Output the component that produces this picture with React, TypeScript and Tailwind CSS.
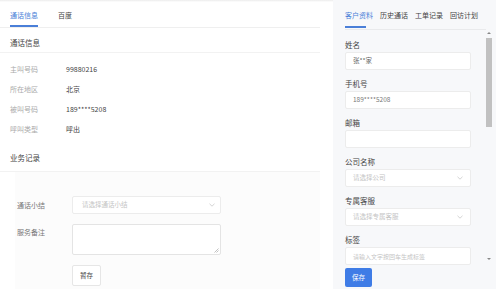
import React from "react";

const Chevron = () => (
  <svg width="6" height="4" viewBox="0 0 6 4" className="shrink-0">
    <polyline points="0.5,0.8 3,3.2 5.5,0.8" fill="none" stroke="#c8c8c8" strokeWidth="0.8" />
  </svg>
);

const InfoRow = ({ label, value }: { label: string; value: string }) => (
  <div className="h-[20px] flex items-center">
    <div className="w-[56px] text-[7px] text-[#aaa]">{label}</div>
    <div className="text-[7px] text-[#444]">{value}</div>
  </div>
);

const Field = ({ label, children }: { label: string; children: React.ReactNode }) => (
  <div className="flex flex-col">
    <div className="h-[11px] leading-[11px] text-[7.5px] text-[#444]">{label}</div>
    <div className="mt-[2px]">{children}</div>
  </div>
);

const Box = ({ children }: { children?: React.ReactNode }) => (
  <div className="w-[126px] h-[18px] bg-white border border-[#ececec] rounded-[2px] flex items-center px-[7px] text-[6.5px]">
    {children}
  </div>
);

export default function App() {
  return (
    <div
      className="w-[496px] h-[289px] overflow-hidden bg-white flex relative"
      style={{ fontFamily: '"Noto Sans CJK SC", "Noto Sans", sans-serif' }}
    >
      <div className="absolute top-0 left-0 right-0 h-[2px] bg-gradient-to-b from-[#ececec] to-transparent" />
      {/* Left panel */}
      <div className="w-[320px] shrink-0 flex flex-col">
        <div className="h-[28px] border-b border-[#efefef] flex px-[10px] gap-[20px]">
          <div className="h-full border-b-2 border-[#4a7fd8] pt-[11px] leading-[8px] text-[7px] text-[#4a7fd8]">通话信息</div>
          <div className="h-full pt-[11px] leading-[8px] text-[7px] text-[#444]">百度</div>
        </div>
        <div className="h-[25px] border-b border-[#f2f2f2] pl-[10px] pt-[11px] leading-[8px] text-[7.5px] text-[#444]">通话信息</div>
        <div className="pl-[10px] pt-[6px]">
          <InfoRow label="主叫号码" value="99880216" />
          <InfoRow label="所在地区" value="北京" />
          <InfoRow label="被叫号码" value="189****5208" />
          <InfoRow label="呼叫类型" value="呼出" />
        </div>
        <div className="mt-[15px] pb-[9px] border-b border-[#f2f2f2] pl-[10px] leading-[8px] text-[7.5px] text-[#444]">业务记录</div>
        <div className="ml-[15px] flex-1 bg-[#fcfcfc] pl-[2px] pt-[24px] flex flex-col gap-[10px]">
          <div className="flex items-center">
            <div className="w-[55px] text-[7px] text-[#777]">通话小结</div>
            <div className="w-[149px] h-[18px] bg-white border border-[#ececec] rounded-[2px] flex items-center justify-between pl-[9px] pr-[5px]">
              <span className="text-[6.5px] text-[#c4c4c4]">请选择通话小结</span>
              <Chevron />
            </div>
          </div>
          <div className="flex items-start">
            <div className="w-[55px] text-[7px] text-[#777] pt-[3px]">服务备注</div>
            <div className="w-[149px] h-[31px] bg-white border border-[#e4e4e4] rounded-[2px] relative">
              <svg width="5" height="5" viewBox="0 0 5 5" className="absolute right-[1px] bottom-[1px]">
                <line x1="0.5" y1="4.5" x2="4.5" y2="0.5" stroke="#999" strokeWidth="0.6" />
                <line x1="2.5" y1="4.5" x2="4.5" y2="2.5" stroke="#999" strokeWidth="0.6" />
              </svg>
            </div>
          </div>
          <div className="pl-[55px]">
            <div className="w-[29px] h-[21px] bg-white border border-[#e6e6e6] rounded-[2px] flex items-center justify-center text-[6.5px] text-[#444]">暂存</div>
          </div>
        </div>
      </div>
      <div className="w-[13px] shrink-0" />
      {/* Right panel */}
      <div className="flex-1 bg-[#f7f8fa] relative flex">
        <div className="pl-[12px] flex flex-col">
          <div className="h-[30px] w-[141px] border-b border-[#e9eaec] flex gap-[7px]">
            <div className="h-full flex flex-col items-start">
              <div className="pt-[11px] leading-[8px] text-[7px] text-[#4a7fd8]">客户资料</div>
              <div className="mt-auto mb-[1px] w-[21px] h-[2px] bg-[#4a7fd8]" />
            </div>
            <div className="pt-[11px] leading-[8px] text-[7px] text-[#444]">历史通话</div>
            <div className="pt-[11px] leading-[8px] text-[7px] text-[#444]">工单记录</div>
            <div className="pt-[11px] leading-[8px] text-[7px] text-[#444]">回访计划</div>
          </div>
          <div className="pt-[9px] flex flex-col gap-[8px]">
            <Field label="姓名">
              <Box><span className="text-[#666]">张**家</span></Box>
            </Field>
            <Field label="手机号">
              <Box><span className="text-[#777]">189****5208</span></Box>
            </Field>
            <Field label="邮箱">
              <Box />
            </Field>
            <Field label="公司名称">
              <Box>
                <span className="flex-1 text-[#c4c4c4]">请选择公司</span>
                <Chevron />
              </Box>
            </Field>
            <Field label="专属客服">
              <Box>
                <span className="flex-1 text-[#c4c4c4]">请选择专属客服</span>
                <Chevron />
              </Box>
            </Field>
            <Field label="标签">
              <Box>
                <span className="text-[#c4c4c4] text-[6px]">请输入文字按回车生成标签</span>
              </Box>
            </Field>
          </div>
          <div className="mt-[3px] w-[27px] h-[19px] bg-[#3f7ce6] rounded-[2px] flex items-center justify-center text-[6.5px] text-white">保存</div>
        </div>
        {/* scrollbar */}
        <div className="absolute right-[3px] top-[30px] w-[8px] h-[232px] flex flex-col items-center">
          <div className="h-[6px] flex items-center">
            <div className="w-0 h-0 border-l-[2px] border-r-[2px] border-b-[2px] border-l-transparent border-r-transparent border-b-[#888]" />
          </div>
          <div className="mt-[2px] w-[6px] h-[89px] bg-[#c1c1c1]" />
          <div className="mt-auto h-[6px] flex items-center">
            <div className="w-0 h-0 border-l-[2px] border-r-[2px] border-t-[2px] border-l-transparent border-r-transparent border-t-[#888]" />
          </div>
        </div>
      </div>
    </div>
  );
}
